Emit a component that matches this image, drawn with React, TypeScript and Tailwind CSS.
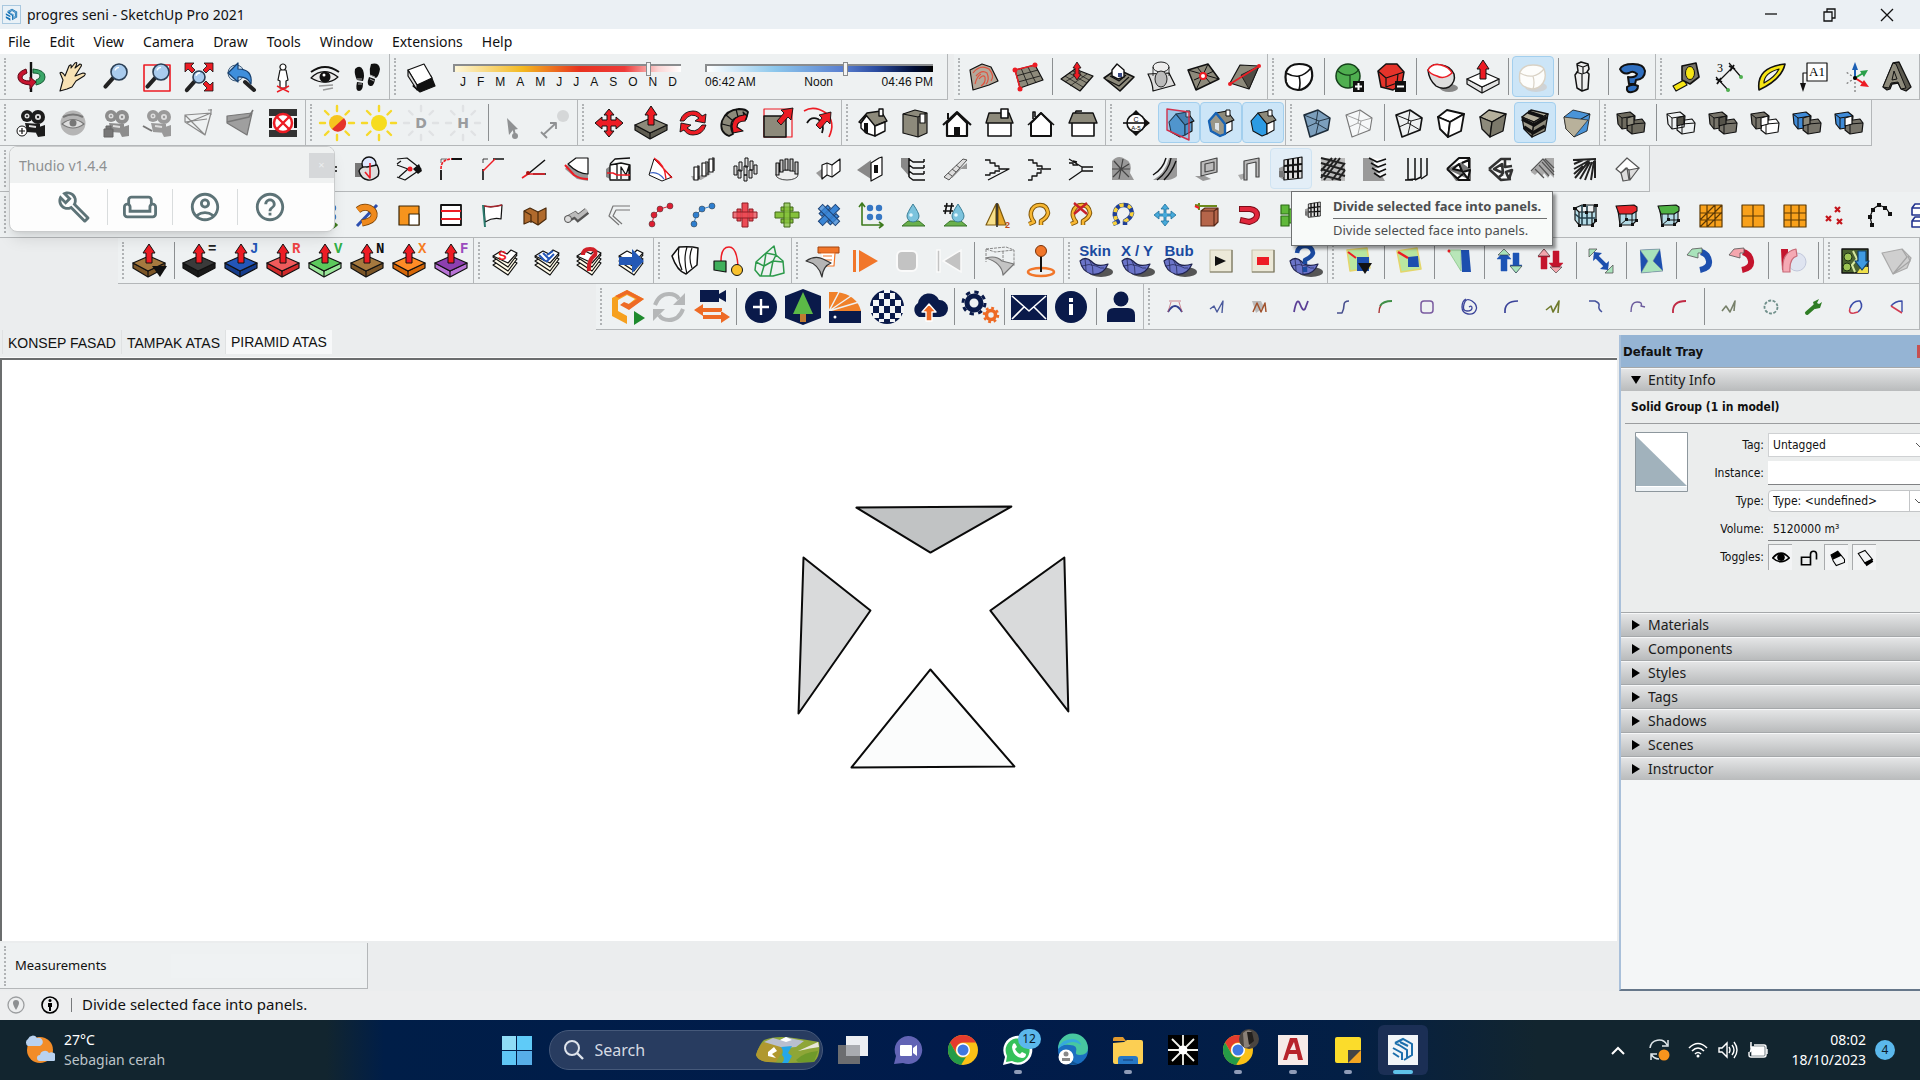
import React from 'react';
import { MdOutlineBuild, MdOutlineWeekend, MdOutlineAccountCircle, MdHelpOutline } from 'react-icons/md';
import { clsx } from 'clsx';

interface StrokeProps {
  d: string;
  c?: string;
  w?: number;
  f?: string;
}

// Stroked path with the defaults most toolbar glyphs use
function P({ d, c = '#111', w = 1.2, f = 'none' }: StrokeProps) {
  return <path d={d} stroke={c} strokeWidth={w} fill={f} strokeLinejoin="round" />;
}

const STONE = '#8d8a7b';
const RED = '#ed1c24';
const NAVY = '#0a1a4a';

/* ---------- shared glyph parts ---------- */

const upArrow = <P d="M18 1l6 9h-3v10h-6V10h-3z" f={RED} w={1} />;

function slab(top: string, side: string, letter?: string, letterColor?: string) {
  return (
    <>
      <P d="M2 20v5l15 9 17-9v-5L17 28z" f={side} />
      <P d="M2 20l16-7 16 7-17 8z" f={top} />
      <P d="M17 28v6" />
      {upArrow}
      {letter && (
        <text x="27" y="10" fontSize="14" fontWeight="700" fill={letterColor} fontFamily="Liberation Mono">
          {letter}
        </text>
      )}
    </>
  );
}

function magnifier(x: number, y: number, r: number) {
  return (
    <>
      <path d={`M${x - r * 0.7} ${y + r * 0.7}L${x - r * 0.7 - 8} ${y + r * 0.7 + 9}`} stroke="#222" strokeWidth="4" strokeLinecap="round" />
      <circle cx={x} cy={y} r={r} fill="#a9cbed" stroke="#2b3f55" strokeWidth="1.6" />
      <path d={`M${x - r * 0.5} ${y - r * 0.2}q1-3 4-3`} stroke="#fff" strokeWidth="1.4" fill="none" />
    </>
  );
}

function movieCamera(c: string, extra: React.ReactNode) {
  return (
    <>
      <circle cx="14" cy="11" r="6" fill={c} />
      <circle cx="25" cy="12" r="7" fill={c} />
      <circle cx="14" cy="11" r="2.5" fill="#ddd" />
      <circle cx="25" cy="12" r="3" fill="#ddd" />
      <circle cx="14" cy="11" r="1" fill={c} />
      <circle cx="25" cy="12" r="1.2" fill={c} />
      <path d="M12 18l15 1v9l-13-1zM26 22l6-2v11l-7 1-2-4z" fill={c} />
      <path d="M16 21l7 1" stroke="#ddd" strokeWidth="2" />
      {extra}
    </>
  );
}

function sun(c: string, center: React.ReactNode) {
  return (
    <>
      {[0, 45, 90, 135, 180, 225, 270, 315].map((a) => (
        <path key={a} d="M18 1v5" stroke={c} strokeWidth="2.4" strokeLinecap="round" transform={`rotate(${a} 18 18)`} />
      ))}
      {center}
    </>
  );
}

function cube(top: string, left: string, right: string, w = 1.3) {
  return (
    <>
      <P d="M5 12l9-7 17 4-14 8z" f={top} w={w} />
      <P d="M5 12l12 5-2 15-8-8z" f={left} w={w} />
      <P d="M17 17l14-8-3 17-13 6z" f={right} w={w} />
    </>
  );
}

function wireCube(f: string, c: string, w: number) {
  return (
    <>
      <P d="M5 10l14-5 12 8-2 12-18 7z" f={f} c={c} w={w} />
      <P d="M5 10l15 6 11-3M20 16l-3 13M19 5l-2 13-9 4M17 18l12 7" c={c} w={w * 0.6} />
    </>
  );
}

function solids(a: string, b: string, mid: string) {
  return (
    <>
      <P d="M4 9l13-2 5 4-1 11-12 2-4-5z" f={a} />
      <P d="M15 16l14-2 3 4-1 9-12 2-5-4z" f={b} />
      <P d="M4 9l5 4 13-2M9 13v11M15 16l4 3 13-1M19 19v10" w={1} />
      <P d="M14 13l7-2v8l-7 2z" f={mid} />
    </>
  );
}

function house(roof: string, wall: string, front: string) {
  return (
    <>
      <P d="M6 16l7-8 9 11v10l-5 2-9-5z" f={front} w={1.1} />
      <P d="M13 8l11-2 7 9-9 4z" f={roof} w={1.1} />
      <P d="M22 19l7-3v9l-7 4z" f={wall} w={1.1} />
      <P d="M23 5h4v6h-4z" f="#fff" w={1} />
    </>
  );
}

function layers(over: React.ReactNode) {
  return (
    <>
      {[24, 20, 16].map((y) => (
        <P key={y} d={`M6 ${y - 2}l5-3 8 5 5-7 6 3-9 12z`} f="#fffbe8" w={1.2} />
      ))}
      <P d="M6 13l8-5 6 3 4-4 6 3-9 10z" f="#fff" w={1.2} />
      {over}
    </>
  );
}

function dots(c: string) {
  return (
    <>
      <P d="M9 27l2-9 6-6 10-3" c={c} w={1} />
      {[[9, 27], [11, 18], [17, 12], [27, 9]].map(([x, y]) => (
        <circle key={x} cx={x} cy={y} r="3" fill={c} stroke="#333" strokeWidth=".5" />
      ))}
    </>
  );
}

function plusBlocks(c: string, edge: string, angle: number) {
  return (
    <g transform={`rotate(${angle} 18 18)`} fill={c} stroke={edge} strokeWidth="1">
      <path d="M15 6h6v24h-6z" />
      <path d="M10 12h4v12h-4zM22 12h4v12h-4z" />
      <path d="M6 15h24v6H6z" fillOpacity=".75" />
    </g>
  );
}

function sail(label: string) {
  return (
    <>
      <ellipse cx="24" cy="29" rx="12" ry="5" fill="#555" />
      <P d="M3 18Q8 13 14 18Q20 25 31 21Q26 33 14 31Q5 28 3 18z" f="#6b74c9" c="#20244f" />
      <P d="M5 23q7-3 14 0q5 3 8 2M12 16q5 8 4 15M8 16q1 8 1 12" c="#20244f" w={0.7} />
      <text x="18" y="13" textAnchor="middle" fontSize="15" fontWeight="700" fill="#1b4aa0" fontFamily="Liberation Sans">
        {label}
      </text>
    </>
  );
}

function loop(c: string, w: number, dash?: string) {
  return (
    <path
      d="M8 27l5-2q-4-5-3-10q2-7 9-7t8 8q-1 5-7 8v4"
      stroke={c}
      strokeWidth={w}
      strokeDasharray={dash}
      fill="none"
      strokeLinejoin="round"
    />
  );
}

function drop(x: number) {
  return (
    <>
      <P d="M7 29l6-5h11l6 5z" f="#6ab04c" c="#39752a" w={1} />
      <P d={`M${x} 7q6 9 6 12a6 6 0 0 1-12 0q0-3 6-12z`} f="#7cc3dd" c="#3b7f97" w={1} />
      <circle cx={x - 2} cy="18" r="1.8" fill="#e5f7fd" />
    </>
  );
}

function latticeBox(top: string) {
  return (
    <>
      <P d="M9 14h18v10l-4 4H11z" f="#b4dbe6" w={1.1} />
      <P d="M11 28V15M23 28V15M11 28l6-5h10M17 23V13" w={1} />
      <P d="M7 9l18-1 3 2v4l-5 3H10z" f={top} w={1.1} />
      <path d="M10 27h3v3h-3zM22 26h3v3h-3zM26 22h3v3h-3zM16 21h3v3h-3z" fill="#111" />
    </>
  );
}

function orangeGrid(lines: string) {
  return <P d={`M7 8h22v22H7z${lines}`} f="#f9a11b" c="#5d3a05" w={1.2} />;
}

function blockArrows(a: string, b: string, flip: boolean) {
  return (
    <g transform={flip ? 'rotate(180 18 18)' : undefined}>
      <P d="M10 28V16H6l7-8 7 8h-4v12z" f={a} c={a} w={0.5} />
      <P d="M13 6l6 6H7z" f={b} c="#333" w={0.6} />
      <P d="M22 10h6v12h3l-6 8-6-8h3z" f={a} c={a} w={0.5} />
      <P d="M19 23h12l-6 7z" f={b} c="#333" w={0.6} />
    </g>
  );
}

function uTurn(a: string, b: string) {
  return (
    <>
      <path d="M17 27q10-2 9-9t-8-9" stroke={a} strokeWidth="6" fill="none" />
      <P d="M19 5v5h-4v5L4 12l5-6z" f={b} c="#555" w={0.8} />
    </>
  );
}

/* ---------- icon table, 36x36 with the centre on 18,18 ---------- */

const icons: Record<string, React.ReactNode> = {
  hidden: null,

  // Camera
  Orbit: (
    <>
      <P d="M20 10q12 1 12 8q0 6-9 8v-5q4-1 4-4q0-3-7-3z" f="#3aa668" c="#155c33" w={1} />
      <P d="M18 3v30" w={2.4} />
      <P d="M13 10Q4 13 5 19q1 6 12 7v4l6-7-6-5v4q-8 0-8-4q0-2 5-4z" f="#c8142f" c="#5e0715" w={1} />
    </>
  ),
  Pan: (
    <P d="M5 32l3-11-3-7q2-2 5 3l4-10q3-3 2 2l4-5q3-2 1 3l-1 2 5-4q3 0 0 4l-5 8 8-3q4 0 1 3l-8 5-4 6-5 2z" f="#f8e2b4" w={1.1} />
  ),
  Zoom: magnifier(22, 13, 8),
  'Zoom Window': (
    <>
      <P d="M5 6h26v26H5z" c={RED} w={1.6} />
      {magnifier(22, 13, 8)}
    </>
  ),
  'Zoom Extents': (
    <>
      {magnifier(18, 18, 6)}
      <P d="M4 4h9l-3 3 4 4-3 3-4-4-3 3zM32 4h-9l3 3-4 4 3 3 4-4 3 3zM32 32h-9l3-3-4-4 3-3 4 4 3-3z" f={RED} w={0.8} />
    </>
  ),
  Previous: (
    <>
      <path d="M22 23l9 8" stroke="#222" strokeWidth="4" strokeLinecap="round" />
      <circle cx="13" cy="14" r="8" fill="#cfe0f0" stroke="#44607d" />
      <P d="M5 14L15 4v6q15 0 13 15q-4-8-13-7v5z" f="#3f8fdc" c="#173f6d" />
    </>
  ),
  'Position Camera': (
    <>
      <P d="M15 11h6l2 10-2 1v7h-6v-7l-2-1zM18 5a3 3 0 1 1-.1 0z" f="#fff" />
      <P d="M12 27l12 6M24 27l-12 6" c={RED} w={1.4} />
    </>
  ),
  'Look Around': (
    <>
      <P d="M4 19q12-12 27-1q-11 10-27 1z" f="#e9e9e9" />
      <circle cx="18" cy="18" r="5.5" fill="#111" />
      <circle cx="17" cy="16" r="1.5" fill="#fff" />
      <P d="M4 13Q18 3 32 13" w={2} />
      <P d="M12 27l14-1M16 31l10-2" c="#999" w={1.5} />
    </>
  ),
  Walk: (
    <>
      <path d="M6 10q5-5 8 1q2 6 0 11l-6-1q-3-6-2-11zM8 23l6 1q0 8-4 8t-2-9zM22 5q8-2 9 5q-1 7-4 9l-6-3q-1-6 1-11zM20 18l6 2q-1 8-5 7t-1-9z" fill="#111" />
      <path d="M8 20h5M9 25h4M21 16l5 2M21 20l4 2" stroke="#aaa" strokeWidth="1" />
    </>
  ),
  'Show Shadows': (
    <>
      <P d="M10 27l7 6 15-6-4-10z" f="#111" />
      <P d="M5 11l16-6 8 14-15 7z" f="#fff" />
      <P d="M5 11l9 15v5L5 17z" f="#ddd" />
    </>
  ),

  // Sandbox
  Contours: (
    <>
      <P d="M3 11l12-6 9 3 7 14-9 4-16 5z" f="#b4a89a" />
      <P d="M6 14q7-9 16-4q6 7 2 12M9 17q6-7 11-3q3 7-1 11M12 20q4-5 6-2q1 6-4 9M8 25q2-8 6-10" c="#e0533f" w={1.2} />
    </>
  ),
  Scratch: (
    <>
      <P d="M6 11l20-5 8 15-23 8z" f={STONE} />
      <P d="M12 9l7 17M19 8l8 16M7 17l22-6M9 23l22-6" w={0.8} />
      <P d="M11 29L6 11l20-5" c={RED} w={1.5} />
      <circle cx="6" cy="11" r="2.5" fill={RED} />
      <circle cx="26" cy="6" r="2.5" fill={RED} />
      <circle cx="11" cy="30" r="2.5" fill={RED} />
    </>
  ),
  Smoove: (
    <>
      <P d="M2 20l14-10 18 7-13 15z" f={STONE} />
      <P d="M6 17l18 11M10 14l18 10M6 23l16-10M11 27l17-12M14 12l16 9" w={0.7} />
      <P d="M18 3l4 6h-2v6h2l-4 6-4-6h2V9h-2z" f={RED} w={0.8} />
    </>
  ),
  Stamp: (
    <>
      <P d="M3 19l13-9 17 8-14 14z" f={STONE} w={1.6} />
      <P d="M6 21l12 6 10-9M9 17l9 5 7-6" />
      <P d="M11 11l5-6 7 6v7l-6 2-6-3z" f="#fff" w={1.4} />
      <path d="M17 14h4v4h-4z" fill="#3b4b86" />
    </>
  ),
  Drape: (
    <>
      <P d="M5 15l21-1 6 12-22 6q0-7-5-17z" f="#ddd" w={1.2} />
      <ellipse cx="18" cy="8" rx="8" ry="5" fill="#eee" stroke="#222" />
      <P d="M10 8v9M26 8v9" w={0.8} />
      <ellipse cx="18" cy="20" rx="6" ry="8" fill="#bbb" stroke="#222" />
    </>
  ),
  'Add Detail': (
    <>
      <P d="M3 11l20-6 11 15-23 11z" f={STONE} w={1.5} />
      <P d="M3 11l31 9M23 5L11 31M9 21l20-9M12 8l14 17" w={1} />
      <circle cx="18" cy="17" r="3" fill="#fff" stroke={RED} strokeWidth="2" />
    </>
  ),
  'Flip Edge': (
    <>
      <P d="M3 24L13 6l19 1-10 23z" f={STONE} />
      <P d="M32 7l-10 23-8-14z" f="#4f4d45" w={0.8} />
      <P d="M3 25L32 7" c={RED} w={1.6} />
      <circle cx="3" cy="25" r="2" fill={RED} />
      <circle cx="32" cy="7" r="2" fill={RED} />
    </>
  ),

  // SubD
  Subdivide: (
    <>
      <P d="M5 13q3-8 13-8q9 0 12 4q3 9-1 15q-5 7-12 7q-10-1-12-8q-1-5 0-10z" f="#fff" w={2.2} />
      <P d="M5 14q7 4 13 3t12-8M18 17q2 7 0 14" w={1.6} />
    </>
  ),
  'Increase Subdivision': (
    <>
      <circle cx="17" cy="17" r="12" fill="#4faf50" stroke="#14401a" strokeWidth="1.5" />
      <P d="M7 12q6 5 12 4t9-6M19 16v13" c="#14401a" />
      <path d="M22 22h11v11H22z" fill="#111" />
      <path d="M27.5 24v7M24 27.5h7" stroke="#fff" strokeWidth="2" />
    </>
  ),
  'Decrease Subdivision': (
    <>
      <P d="M5 12l8-7h11l7 8-2 12-9 6-12-3z" f="#e5332a" w={1.5} />
      <P d="M5 12l8 7 12-4 6-2M13 19v9M25 15l-1 9-11 4" />
      <path d="M22 22h11v11H22z" fill="#111" />
      <path d="M24 27.5h7" stroke="#fff" strokeWidth="2" />
    </>
  ),
  Crease: (
    <>
      <ellipse cx="26" cy="29" rx="9" ry="4" fill="#888" />
      <P d="M5 11q4-7 13-5q9 1 13 9q2 8-5 13-7 3-13-1Q6 21 5 11z" f="#ddd" w={1.5} />
      <P d="M5 11q4-7 13-5q8 2 11 8-8 7-15 3Q7 15 5 11z" f="#fff" c={RED} w={1.5} />
    </>
  ),
  'SubD Push Pull': slab('#fff', '#e3e3e3'),
  'SubD Preview': (
    <>
      <ellipse cx="21" cy="28" rx="11" ry="5" fill="#cfd3d6" />
      <P d="M5 13q3-7 13-7q9 0 11 4q3 8-1 14q-4 6-11 6q-9-1-12-7q-1-5 0-10z" f="#fdfdfb" c="#d9d2c5" w={1.4} />
      <P d="M5 14q7 4 13 3t11-7M18 17q2 7 0 13" c="#d9d2c5" />
    </>
  ),
  'Loop Select': (
    <>
      <P d="M12 5l4-2 7 2 1 5-2 3 2 2-1 15-6 2-5-3-2-13 3-4z" f="#eee" w={1.5} />
      <P d="M12 6l6 2 5-2M11 13l6 2 6-2M17 15v17M18 8v6" />
    </>
  ),
  'SubD Help': (
    <P d="M5 10q2-5 13-5t12 7q0 8-9 9l-1 4h-6l-1-7q8 1 9-3-4-4-8-1-6 2-9-4zM12 28q5-4 11-1 0 5-6 6t-5-5z" f="#2f6fc0" w={2} />
  ),

  // Construction
  'Tape Measure': (
    <>
      <P d="M4 27l11-6 3 5-11 6z" f="#f6e514" />
      <P d="M13 7l14-3 3 14-9 7-8-4z" f="#77746a" w={1.6} />
      <ellipse cx="21" cy="14" rx="4.5" ry="6.5" fill="#f6e514" stroke="#111" />
    </>
  ),
  Dimension: (
    <>
      <P d="M8 22L21 9M5 18l13 14M18 4l12 14" />
      <path d="M5 20l6 3M6 25l4-6M18 7l6 3M19 12l4-6" stroke="#111" strokeWidth="1.8" />
      <text x="6" y="13" fontSize="12" fontFamily="Liberation Serif">3</text>
      <circle cx="17" cy="31" r="2" fill="#4faf50" />
      <circle cx="30" cy="18" r="2" fill="#4faf50" />
    </>
  ),
  Protractor: (
    <>
      <P d="M6 31Q3 8 32 5 29 20 6 31z" f="#f6e514" w={1.6} />
      <P d="M11 24q0-10 15-14-4 8-15 14z" f="#eef1f2" />
    </>
  ),
  Text: (
    <>
      <P d="M12 4h20v18H12zM12 14H8v12" f="#fff" />
      <path d="M5 24h6l-3 9z" fill="#111" />
      <text x="22" y="17" fontSize="13" textAnchor="middle" fontFamily="Liberation Serif">A1</text>
    </>
  ),
  Axes: (
    <>
      <path d="M18 19L9 13M18 19v14M18 19l-9 6" stroke="#777" strokeWidth="1.2" strokeDasharray="2 2" />
      <P d="M18 19V6" c="#1b5fb4" w={2} />
      <P d="M18 19l10-6" c="#2aa04a" w={2} />
      <P d="M18 19l11 7" c={RED} w={2} />
      <path d="M18 3l3 8h-6z" fill="#1b5fb4" />
      <path d="M31 11l-8 1 4 6z" fill="#2aa04a" />
      <path d="M32 28l-9-1 4-6z" fill={RED} />
      <circle cx="18" cy="19" r="2" />
    </>
  ),
  '3D Text': (
    <>
      <P d="M4 28L14 4l6-1 12 25-5 4-5-2-3-6-6 1-2 5-3 1z" f="#5b594f" w={1.3} />
      <P d="M4 28L14 4l3 1 10 24-5 1-3-7-7 1-2 5zM15 12l3 8-5 1z" f={STONE} w={1} />
    </>
  ),

  // Advanced camera tools
  'Create Camera': movieCamera(
    '#1c1c1c',
    <>
      <circle cx="9" cy="26" r="5" fill="#fff" stroke="#111" />
      <P d="M9 23v6M6 26h6" />
    </>
  ),
  'Look Through Camera': (
    <>
      <circle cx="18" cy="18" r="12.5" fill="#b5b5b5" />
      <P d="M7 19q11-9 22 0-11 8-22 0z" f="#ddd" c="#777" />
      <circle cx="18" cy="18" r="3.5" fill="#777" />
      <P d="M8 12q10-5 20 0" c="#777" w={2} />
    </>
  ),
  'Lock Camera': movieCamera('#8d8d8d', <path d="M7 24h9v8H7zM9 24v-3h5v3" fill="#777" stroke="#666" />),
  'Camera Lines': movieCamera('#9a9a9a', <P d="M4 21l9 5" c="#777" w={2} />),
  'Frustum Lines': <P d="M4 10l26-2-6 22zM4 10v7l20 13M30 8L6 18M4 17l22-3M30 4v6M27 5h4" c="#8a8a8a" w={1.2} />,
  'Frustum Volume': (
    <>
      <P d="M4 11l25-3-5 22L4 18z" f="#9f9f9f" c="#777" />
      <P d="M4 17l22-5 4-7" c="#777" w={1.6} />
    </>
  ),
  'Clear Aspect Ratio': (
    <>
      <path d="M4 4h28v7H4zM4 25h28v7H4z" fill="#333" />
      <path d="M4 13h3v10H4zM29 13h3v10h-3z" fill="#111" />
      <circle cx="18" cy="18" r="9" fill="#fff" stroke={RED} strokeWidth="2.5" />
      <P d="M12 12l12 12M24 12L12 24" c={RED} w={2.4} />
    </>
  ),

  // Solar
  'Solar North': sun(
    '#f6d92a',
    <>
      <circle cx="18" cy="18" r="8" fill="#f6c51f" />
      <path d="M25 13a8 8 0 0 1-12 11z" fill="#e5332a" />
    </>
  ),
  'Solar Preview': sun('#f6d92a', <circle cx="18" cy="18" r="8" fill="#f6dc1f" />),
  'Solar Day': sun(
    '#e0e2e4',
    <text x="18" y="23" fontSize="14" fontWeight="700" fill="#9a9c9e" textAnchor="middle" fontFamily="DejaVu Sans">D</text>
  ),
  'Solar Hour': sun(
    '#e0e2e4',
    <text x="18" y="23" fontSize="14" fontWeight="700" fill="#9a9c9e" textAnchor="middle" fontFamily="DejaVu Sans">H</text>
  ),
  'Select Point': (
    <>
      <path d="M12 13l11 11-5 1-4 5z" fill="#8f9193" />
      <P d="M18 22l2 8" c="#8f9193" w={2} />
      <circle cx="20" cy="31" r="3" fill="#8f9193" />
    </>
  ),
  'Stretch Point': (
    <>
      <circle cx="26" cy="11" r="6" fill="#d5d7d8" />
      <P d="M6 30L18 19M4 27l6 6M13 18h6v6" c="#8f9193" w={1.8} />
    </>
  ),

  // Edit
  Move: (
    <P d="M18 4l5 6h-3v5h5v-3l7 6-7 6v-3h-5v5h3l-5 6-5-6h3v-5h-5v3l-7-6 7-6v3h5v-5h-3z" f={RED} w={1} />
  ),
  'Push Pull': slab(STONE, '#5f5d52'),
  Rotate: (
    <>
      <P d="M5 16Q8 6 18 6q6 0 9 5l4-2-1 9-10-2 4-3q-8-7-15 3z" f={RED} w={0.9} />
      <P d="M31 20q-3 10-13 10-6 0-9-5l-4 2 1-9 10 2-4 3q8 7 15-3z" f={RED} w={0.9} />
    </>
  ),
  'Follow Me': (
    <>
      <P d="M12 31Q2 27 5 16 9 5 22 4q7 0 9 3l-2 7q-8-4-13 1-4 5 0 14z" f={STONE} w={1.8} />
      <P d="M5 19l8 2M9 10l6 5M19 4l2 8" w={1.2} />
      <P d="M15 21q1-10 12-11l-1-3 4 4-2 5q-8 0-8 6l6 4-10 2z" f={RED} />
    </>
  ),
  Scale: (
    <>
      <P d="M5 4h28v28H5z" c={RED} />
      <P d="M5 11h22v21H5z" f={STONE} w={1.5} />
      <P d="M34 3L22 5l3 3-7 8 4 4 7-8 3 3z" f={RED} w={0.9} />
    </>
  ),
  Offset: (
    <>
      <P d="M3 6Q13 0 25 8q10 9 3 24" c={RED} w={1.6} />
      <P d="M6 18q4-7 11-4 7 5 4 14" w={1.8} />
      <P d="M30 7l-12 3 3 3-6 7 4 4 7-8 3 3z" f={RED} w={0.9} />
    </>
  ),

  // Views
  Iso: (
    <>
      <P d="M6 18l6-8 8 9v12l-9-3-5-5z" f="#fff" w={1.4} />
      <P d="M4 17l8-9 14-2 6 10-12 5-9-11-5 8z" f={STONE} w={1.4} />
      <P d="M20 21l10-4v9l-10 5zM24 4h4v7h-4z" f="#fff" w={1.4} />
      <path d="M9 18h4v11l-4-2z" fill="#111" />
    </>
  ),
  Top: (
    <>
      <P d="M6 9l12-4 12 3v20l-9 4-15-4z" f={STONE} w={1.2} />
      <P d="M6 9l15 3 9-4M21 12v20" w={1.2} />
      <P d="M23 9h5v9h-5z" f="#fff" w={1.2} />
    </>
  ),
  Front: (
    <>
      <P d="M8 18L18 8l10 10v13H8z" f="#fff" w={2.2} />
      <P d="M4 20L18 7l14 13M9 14V8" w={2} />
      <path d="M15 22h6v9h-6z" fill="#111" />
    </>
  ),
  Right: (
    <>
      <P d="M7 17h23v14H7z" f="#fff" w={1.6} />
      <P d="M8 8h20l4 10H5z" f={STONE} w={1.4} />
      <P d="M20 4h7v9h-7z" f="#fff" w={1.6} />
    </>
  ),
  Back: (
    <>
      <P d="M8 18L18 8l10 10v13H8z" f="#fff" w={2} />
      <P d="M5 20L18 8l13 12M10 14V7h2v5" w={1.6} />
    </>
  ),
  Left: (
    <>
      <P d="M7 17h22v14H7z" f="#fff" w={1.6} />
      <P d="M8 8h20l4 10H4zM10 8l1-2h6" f={STONE} w={1.4} />
    </>
  ),

  // Section
  'Section Plane': (
    <>
      <circle cx="17" cy="18" r="9" fill="#fff" stroke="#111" strokeWidth="1.6" />
      <P d="M4 18h26" w={1.6} />
      <path d="M17 5l5 5H12zM31 18l-6-5v10zM17 31l5-5H12z" fill="#111" />
      <text x="17" y="17" fontSize="7" textAnchor="middle" fontFamily="Liberation Sans">C</text>
      <text x="17" y="25" fontSize="6" textAnchor="middle" fontFamily="Liberation Sans">A-5</text>
    </>
  ),
  'Display Section Planes': (
    <>
      <g transform="translate(2 1)">{house('#4a7ba6', '#5b9bd0', '#5b9bd0')}</g>
      <P d="M6 4l22 3v28L6 25z" c="#d2314b" w={1.4} f="#3c8ac955" />
    </>
  ),
  'Display Section Cuts': (
    <>
      {house(STONE, '#fff', '#9a9788')}
      <P d="M6 16l7-8 9 11v10l-5 2-9-5z" c="#1763b5" w={2.4} />
      <path d="M12 18h4v8l-4-2z" fill="#dfe6ea" />
    </>
  ),
  'Display Section Fill': house(STONE, '#fff', '#2d9be3'),

  // Styles
  'X-Ray': wireCube('#7c9fbd', '#1d2c3a', 1.5),
  'Back Edges': wireCube('#f6f8f9', '#777', 1.1),
  Wireframe: wireCube('none', '#111', 1.6),
  'Hidden Line': cube('#fff', '#fff', '#fff', 1.8),
  Shaded: cube('#b5b09c', '#8d8a7b', '#7c796b'),
  'Shaded With Textures': (
    <>
      {cube('#b5b09c', '#a09c8c', '#8d8a7b')}
      <path d="M11 7l15 5M5 14l12 6 13-8M7 22l9 6 12-7" stroke="#111" strokeWidth="3.5" fill="none" />
    </>
  ),
  Monochrome: (
    <>
      {cube('#4a94d8', '#b5b09c', '#4a94d8', 0.8)}
      <P d="M5 12l24 3-14 17-8-8z" f="#b8b19b" w={0.6} />
    </>
  ),

  // Solid tools
  'Outer Shell': solids('#6f6c60', '#6f6c60', '#8d8a7b'),
  Intersect: solids('none', 'none', '#55534a'),
  Union: solids('#77746a', '#77746a', '#55534a'),
  Subtract: solids('#77746a', '#fff', '#fff'),
  Trim: solids('#3f8bd8', '#77746a', '#8d8a7b'),
  Split: solids('#3f8bd8', '#77746a', '#fff'),

  // 1001bit tools
  Revolve: (
    <>
      <path d="M6 12h12v14H6z" fill="#777" />
      <circle cx="20" cy="13" r="7" fill="#dfe8ff" stroke="#111" strokeWidth="1.4" />
      <P d="M10 20q2-5 8-4l10-2q3 6 1 11-6 5-10 4-7-1-9-9z" f="#ddd" w={1.4} />
      <P d="M21 12v15l-5-6" c={RED} w={1.6} />
    </>
  ),
  'Face Center': (
    <>
      <P d="M6 8l10-1 14 11-16 11-8-3M6 14l11 4-9 8M6 13l4-3" w={1.2} />
      <path d="M28 13l3 7-4 3-5-5z" fill="#111" />
      <circle cx="19" cy="18" r="2.5" fill={RED} />
    </>
  ),
  Fillet: (
    <>
      <P d="M8 29V19M18 8h11" w={1.8} />
      <path d="M8 18q0-10 11-10" stroke={RED} strokeWidth="1.6" strokeDasharray="3 1" fill="none" />
      <P d="M8 12V8h6" w={0.6} />
    </>
  ),
  Chamfer: (
    <>
      <P d="M8 29V18M18 8h11" w={1.6} />
      <P d="M8 20L20 8" c={RED} w={1.4} />
      <P d="M8 12V8h5" w={0.8} />
    </>
  ),
  'Extend Edge': (
    <>
      <P d="M11 23L28 9M16 23h13" w={1.5} />
      <P d="M5 27l6-4h17" c={RED} w={1.6} />
      <circle cx="11" cy="22" r="2" fill="#a11" />
    </>
  ),
  'Offset Edges': (
    <>
      <path d="M6 18l12 10 11 2v-7L10 12z" fill="#999" />
      <P d="M9 13l8-6h12v16q-10 0-20-10z" f="#fff" />
      <P d="M6 14l9 10q6 4 14 4" c={RED} w={2} />
    </>
  ),
  'Horizontal Plane': (
    <>
      <path d="M5 18l4-3v13l-4-2z" fill="#888" />
      <P d="M9 13l5-5 15-1M9 14v15h20V14l-9-2zM16 13v15M20 28V16l5 8 3-9v14" w={1.3} f="#fff" />
      <P d="M6 22h6l4 2h13" c={RED} w={1.5} />
    </>
  ),
  'Best Fit': (
    <>
      <P d="M11 8l18 18-10 4-13-6 5-16z" f="#fff" w={1} />
      <P d="M11 7q11 6 12 21M12 8l17 19" c={RED} w={1.4} />
      <P d="M7 22q8-2 14 6" c="#3b62c4" />
    </>
  ),
  'Linear Array': (
    <>
      <path d="M6 25h8l9-4 3 2-10 6H8z" fill="#aaa" />
      <P d="M9 16h4v13H9zM17 12h4v13h-4zM24 8h4v13h-4z" f="#fff" />
      <P d="M12 15h2v13M20 11h3v13M27 7h2v13" />
    </>
  ),
  'Rectangular Array': (
    <P d="M7 15h3v9H7zM12 11h3v9h-3zM18 7h3v9h-3zM23 10h3v9h-3zM11 19h3v8h-3zM17 15h3v9h-3zM27 14h3v9h-3zM17 24h3v6h-3zM22 19h3v8h-3z" f="#ddd" w={1} />
  ),
  'Polar Array': (
    <>
      <ellipse cx="18" cy="24" rx="11" ry="5" fill="#eee" stroke="#444" />
      <P d="M7 12h3v12H7zM11 9h3v12h-3zM16 8h3v11h-3zM21 8h3v12h-3zM26 11h3v12h-3z" f="#ccc" w={1.1} />
    </>
  ),
  'Vertical Wall': (
    <>
      <path d="M5 22l10-7v9l-4 4z" fill="#999" />
      <P d="M11 14l5-2 5 2 8-6v12l-8 6-5-2-5 4z" f="#fff" w={1.2} />
      <P d="M16 12v12M21 14v12" w={0.8} />
    </>
  ),
  'Wall Opening': (
    <>
      <path d="M4 19l14-10v19z" fill="#888" />
      <P d="M18 12l8-5 3-1v18l-11 6z" f="#fff" w={1.2} />
      <path d="M21 14h4v8h-4z" fill="#111" />
    </>
  ),
  'Horizontal Groove': (
    <>
      <path d="M6 7h8v18l-8-9z" fill="#888" />
      <P d="M14 8l4 3h11M14 14l4 3h11M14 20l4 3h11M14 26l4 3h12M14 7v19M29 8v3M29 14v3M29 20v3" w={1.5} />
    </>
  ),
  Ramp: (
    <>
      <path d="M14 25l16-13v6h-6l-9 9z" fill="#999" />
      <P d="M7 26L26 8l4 1L12 29zM11 22l4 3M15 18l4 3M19 14l4 3" f="#ddd" c="#555" w={1} />
    </>
  ),
  'Stair Up': <P d="M6 9h5v3h5v3h4v3h10L9 29M6 24h5v-2h5v-2h5" w={1.3} />,
  'Stair Down': <P d="M7 9h5v3h4v3h5v3h9M7 29h4v-4h5v-3h4v-3M16 18h12" w={1.3} />,
  'Stair Split': <P d="M6 8l13 8h11M6 29l13-9h11M6 12h4v2h5M19 16v4M10 10l4 1" w={1.3} />,
  'Spiral Stair': (
    <>
      <path d="M7 10q6-7 13-2 8 3 5 14l4 7H7z" fill="#999" />
      <P d="M7 18h9l-7-8M16 18l2-10M16 18l8-5M16 18h9M16 18l8 8M16 18l-2 10M8 26l8-8" c="#444" />
    </>
  ),
  Escalator: (
    <>
      <path d="M6 29q12-6 16-22h8v18q-3 3-9 4z" fill="#999" />
      <P d="M6 24q10-6 13-17M10 29q12-9 14-22M17 29q8-8 12-19" w={1.4} />
    </>
  ),
  'Window Frame': (
    <>
      <path d="M6 25h10l6 3-8 2z" fill="#999" />
      <P d="M12 11l16-4v14l-16 4zM16 13l9-2v8l-9 2z" f="#bbb" c="#444" />
    </>
  ),
  'Door Frame': (
    <>
      <path d="M7 24l8-2v4l-5 3z" fill="#aaa" />
      <P d="M13 29V10l15-3v19h-3V11l-9 2v16z" f="#bbb" c="#444" />
    </>
  ),
  'Divide Face': (
    <>
      <path d="M6 17l5-2v14l-5-3z" fill="#999" />
      <P d="M11 9l18-3v21l-18 2z" f="#ddd" w={1.2} />
      <P d="M15 8v20M20 7v20M25 7v20M11 15l18-2M11 21l18-1" w={2} />
      <path d="M6 20h5v6H6z" fill="#777" />
    </>
  ),
  Louvers: (
    <>
      <path d="M6 7h24v23H6z" fill="#bbb" />
      <P d="M6 7l24 6M6 12l24 7M6 18l24 7M6 24l20 5M9 29L25 7M17 29L30 12M6 20L17 7M6 27L21 7M23 29l7-10" w={2} c="#222" />
    </>
  ),
  'Louver Stack': (
    <>
      <path d="M6 7h8l14 23H6z" fill="#999" />
      <P d="M12 7l8 4 9-3M14 12l7 4 8-3M15 17l7 4 7-3M17 22l6 4 6-3" w={1.7} f="#fff" />
    </>
  ),
  Fins: <P d="M9 7v21M16 7v21l-9 1M22 7v19l-6 3M28 7v17l-6 4M6 29h8" w={1.5} />,
  'Grid Dense': (
    <>
      <path d="M6 18L17 7h13v23H15z" fill="#777" />
      <P d="M6 18L18 7h11M6 18l12 11h11M12 18l6-5 3 7zM21 12l7-3v8M22 21l7-2-2 9zM17 27l5-4" w={2} f="#fff" />
    </>
  ),
  'Grid Frame': (
    <P d="M6 18L18 8h10M6 18l12 11 10-1M11 18l8-5 1 9zM22 9v7l7-1M23 21l6-2-3 9zM16 26l4-3" w={2.6} f="#fff" c="#333" />
  ),
  Purlins: (
    <>
      <path d="M6 21L20 7h9v20l-4-4-2 4-4-5-2 4-4-5-3 3z" fill="#aaa" />
      <P d="M6 20L18 8l11 13M10 18l9 9M14 14l10 11M17 11l12 13M20 8l9 9" c="#555" />
    </>
  ),
  Rafters: <P d="M6 9l23-1M7 13l9-4M7 18l16-9M8 27l14-17M13 28l10-17M18 29l7-18M24 29l3-19M28 27V9M7 23l9-8" w={2} c="#222" />,
  'Hip Roof': (
    <>
      <P d="M7 18L18 7l12 10-7 4-6-4-5 5z" f="#fff" c="#555" />
      <P d="M12 22l6-5 2 12-6 1zM20 19l10-2-9 12z" f="#ddd" c="#555" />
    </>
  ),

  // JHS power bar
  Ring: (
    <>
      <P d="M8 29L28 8" c="#2d4fb0" w={3} />
      <path d="M9 13q5-4 11-2 6 3 5 8t-12 7" stroke="#7a4308" strokeWidth="7" fill="none" />
      <path d="M9 13q5-4 11-2 6 3 5 8t-12 7" stroke="#ef8a1d" strokeWidth="5.5" fill="none" />
    </>
  ),
  'Corner Cut': (
    <>
      <P d="M8 9h20v19H8z" f="#f7941d" c="#3b2608" />
      <P d="M18 17h10v11H18z" f="#fff" c="#3b2608" />
    </>
  ),
  Lines: (
    <>
      <P d="M8 8h20v20H8z" f="#fff" w={1.8} />
      <P d="M8 14h20M8 22h20" c={RED} w={2} />
    </>
  ),
  Flag: (
    <>
      <P d="M9 9q8 2 18-1l-1 14q-8-2-16 3z" f="#fff" />
      <P d="M9 9q8 2 18-1" c="#a8252c" w={1.6} />
      <P d="M8 8l2 22" c="#2b7a6d" w={2} />
    </>
  ),
  'Wood Profile': (
    <>
      <P d="M7 14l6-3 8 4 8-4v11l-8 6-7-4-7 3z" f="#b06a2c" c="#4a2a0c" />
      <P d="M7 14l7 4v8M21 15v13" c="#4a2a0c" />
    </>
  ),
  Pipe: (
    <>
      <path d="M7 23l9-5 3 3 9-7" stroke="#555" strokeWidth="7" fill="none" />
      <path d="M7 22l9-5 3 3 9-7" stroke="#bbb" strokeWidth="4" fill="none" />
      <circle cx="9" cy="22" r="3.5" fill="#ddd" stroke="#555" />
    </>
  ),
  Elbow: <P d="M29 9H12l-4 10 10 9M29 13H15l-3 6 9 8" c="#777" />,
  'Red Dots': dots('#dd1f33'),
  'Blue Dots': dots('#2f7fcf'),
  'Cross Red': plusBlocks('#ec4b55', '#8d1c24', 0),
  'Cross Green': plusBlocks('#86c13c', '#42681a', 90),
  'Cross Blue': plusBlocks('#3b86d6', '#1b4277', 45),
  'Axis Array': (
    <>
      <P d="M9 7v21h20M6 10l3-4 3 4M26 25l4 3-4 3" c="#3d7a1d" w={1.6} />
      {[[17, 11], [26, 11], [17, 20], [26, 20]].map(([x, y]) => (
        <circle key={`${x}-${y}`} cx={x} cy={y} r="3.2" fill="#3677c4" />
      ))}
    </>
  ),
  Drop: drop(18),
  'Drop Grid': (
    <>
      {drop(21)}
      <P d="M10 6L8 17M15 6l-2 11M7 9h10M6 14h10" w={1.6} />
    </>
  ),
  Mirror: (
    <>
      <P d="M17 7v21H7z" f="#f8e08a" c="#7c5a10" />
      <P d="M19 7v21h8z" f="#e8a92c" c="#7c5a10" />
      <P d="M18 6v24" w={1.4} />
      <text x="26" y="31" fontSize="9" fontWeight="700" fill="#c14a1a" fontFamily="Liberation Sans">2</text>
    </>
  ),
  Loop: (
    <>
      {loop('#7b5206', 4.5)}
      {loop('#f7b733', 2.6)}
    </>
  ),
  'Loop Remove': (
    <>
      {loop('#7b5206', 4.5)}
      {loop('#f7b733', 2.6)}
      <P d="M11 6l13 11M24 6L11 17" c="#c8202a" w={2.4} />
    </>
  ),
  'Loop Divide': (
    <>
      {loop('#1f3f96', 4.5)}
      {loop('#f9d33c', 3.5, '4 4')}
    </>
  ),
  'Drop Move': (
    <>
      <path d="M18 7l4 5h-3v4h-2v-4h-3zM18 29l4-5h-3v-4h-2v4h-3zM7 18l5-4v3h4v2h-4v3zM29 18l-5-4v3h-4v2h4v3z" fill="#46aadb" stroke="#1f6f99" strokeWidth=".8" />
      <circle cx="18" cy="18" r="2.5" fill="#46aadb" />
    </>
  ),
  Crate: (
    <>
      <P d="M12 14l4-3h13v14l-4 4H12zM12 14h13v15M25 14l4-3" f="#b5654a" c="#5a2a1a" />
      <P d="M6 8l8 1h14M10 6v7" c="#6d8a1c" w={2} />
      <P d="M6 9l4 2" c={RED} w={2} />
    </>
  ),
  'Bend Arrow': (
    <>
      <path d="M8 12h11q7 1 7 6t-8 7l-9-2" stroke="#7c0c18" strokeWidth="6" fill="none" />
      <path d="M9 12h10q7 1 7 6t-8 7l-8-2" stroke="#e0263b" strokeWidth="4" fill="none" />
    </>
  ),
  'Green Blocks': <P d="M8 8h8v9H8zM8 19h8v10H8zM16 12h8v14h-8z" f="#5fb83a" c="#2c6b17" />,
  'Box Points': (
    <>
      <P d="M8 11l4 4h15V9l2-1M8 11l7-3h14v16l-4 4H12l-4-5zM12 15v13M25 15v13" f="#b4dbe6" />
      <P d="M8 17l5 4h15M15 8v20M20 9v19" w={1.6} c="#24404c" />
      <path d="M6 10h4v3H6zM27 7h4v3h-4zM11 27h3v3h-3zM24 27h3v3h-3zM18 14h3v3h-3zM16 7h3v3h-3zM27 22h3v3h-3z" fill="#111" />
    </>
  ),
  'Box Red Top': latticeBox('#e5262b'),
  'Box Green Top': latticeBox('#4fb244'),
  'Grid Diagonal': orangeGrid('M14 8v22M22 8v22M7 16h22M7 23h22M7 23L22 8M7 30L29 8M14 30l15-15'),
  'Grid Quarter': orangeGrid('M18 8v22M7 19h22'),
  'Grid Ninth': orangeGrid('M14 8v22M22 8v22M7 16h22M7 23h22'),
  Points: <P d="M16 10l5 5M21 10l-5 5M7 19l5 5M12 19l-5 5M18 22l5 5M23 22l-5 5" c="#c4161c" w={2.2} />,
  'Arc Points': (
    <>
      <P d="M11 28l-2-8 3-8 6-4 7 3 4 6" />
      <path d="M9 26h4v4H9zM7 18h4v4H7zM10 11h4v4h-4zM16 6h4v4h-4zM22 9h4v4h-4zM27 15h4v4h-4z" fill="#111" />
    </>
  ),
  Frames: <P d="M9 11l3-4h10v8l-3 3H9zM9 24l3-4h10v8l-3 2H9zM9 11h10v7M9 24h10v6" c="#22338f" w={1.6} f="#fff" />,

  // Joint push pull
  'Joint Options': (
    <>
      {slab('#a5793f', '#7b5526')}
      <path d="M21 23h15l-7 11z" fill="#111" />
    </>
  ),
  'Joint Redo': slab('#3a3a3a', '#1a1a1a', '=', '#222'),
  'Joint Push Pull': slab('#2356b8', '#153c8c', 'J', '#2356b8'),
  'Round Push Pull': slab('#ef5b5b', '#d12a2a', 'R', '#ef4444'),
  'Vector Push Pull': slab('#5cc95c', '#9ae69a', 'V', '#2fae46'),
  'Normal Push Pull': slab('#a5793f', '#7b5526', 'N', '#111'),
  'Extrude Push Pull': slab('#ff8b26', '#d66708', 'X', '#f57c1f'),
  'Follow Push Pull': slab('#8e3fb0', '#b873d6', 'F', '#9a4bbd'),

  // Layers
  'Layer S': layers(<text x="11" y="17" fontSize="13" fontWeight="700" fill={RED} fontFamily="Liberation Sans">S</text>),
  'Layer Blue': layers(<P d="M10 12l6 6M14 10l6 6M18 12l6-4M17 19l8-8" c="#2356b8" w={2} />),
  'Layer Query': layers(<P d="M12 12q0-6 7-6t5 6q-7 5-6 16" c="#d12028" w={4} />),
  'Layer Arrow': layers(<path d="M6 14h13V6l12 12-12 12v-8H6z" fill="#2458b5" />),

  // Curviloft style tools
  Skinning: (
    <>
      <P d="M5 13l7-9q12-1 19 1l-1 17-11 9q-9-3-14-18z" f="#fff" w={1.5} />
      <P d="M12 4q-2 12 3 23M20 4q-4 12 0 27M25 5q-4 10 0 20" />
    </>
  ),
  Loft: (
    <>
      <P d="M12 18Q12 4 20 4t9 20" c={RED} w={1.5} />
      <P d="M5 18h12v11l-12-2z" f="#3faf5c" />
      <circle cx="28" cy="27" r="5.5" fill="#f9c22e" stroke="#111" />
    </>
  ),
  'Path Loft': (
    <P d="M5 19l10-9L23 3l2 9 7 6 1 12-11 3H9l-5-6zM5 19l8 4 9-5 10 1M13 23l-3 10M22 18l-3 15M25 12L15 10l-2 13M22 18l3-6" c="#2c9a4b" w={1.5} />
  ),

  // Flowify
  Flowify: (
    <>
      <P d="M13 4h21v6H13z" f="#f1762a" c="#a4450f" w={1} />
      <P d="M16 10h14l-1 13h-9" f="#fff" c="#f1762a" />
      <P d="M18 13h9M19 17h8" c="#f1762a" />
      <P d="M1 18q9-6 17-2l8 4q-8 3-9 14-3-13-16-16z" f="#b5b5b5" c="#333" />
    </>
  ),
  Play: <path d="M6 7h3v22H6zM12 7l19 11-19 11z" fill="#f1762a" />,
  Stop: <rect x="8" y="8" width="20" height="20" rx="5" fill="#c3c3c3" stroke="#fafafa" strokeWidth="2" />,
  Rewind: <path d="M6 7h3v22H6zM30 7v22L12 18z" fill="#c3c3c3" stroke="#fafafa" strokeWidth="1.5" />,
  'Curved Grid': (
    <>
      <path d="M5 6l20-2 8 3v16M5 6v13M5 6l9 3 19-2M22 8v22" stroke="#888" strokeDasharray="3 1" fill="none" />
      <P d="M5 15q10-3 16 3l12 3-11 11q-1-12-17-17z" f="#c4c4c4" c="#777" />
    </>
  ),
  Pin: (
    <>
      <ellipse cx="18" cy="29" rx="13" ry="4" fill="none" stroke="#f1762a" strokeWidth="2.5" />
      <P d="M18 12v17" w={2} />
      <circle cx="18" cy="8" r="5.5" fill="#f1762a" stroke="#7a3208" />
    </>
  ),

  // Soap skin & bubble
  Skin: sail('Skin'),
  'X/Y': sail('X / Y'),
  Bub: sail('Bub'),
  'Run Soap': (
    <>
      <P d="M7 7h22v22H7z" f="#ece9d8" c="#c9c5ae" />
      <P d="M7 29h22V7" c="#77745f" />
      <path d="M12 13l11 5-11 5z" fill="#111" />
    </>
  ),
  'Stop Soap': (
    <>
      <P d="M7 7h22v22H7z" f="#ece9d8" c="#c9c5ae" />
      <P d="M7 29h22V7" c="#77745f" />
      <path d="M12 14h12v8H12z" fill={RED} />
    </>
  ),
  'Soap Help': (
    <>
      {sail('')}
      <P d="M10 10q1-7 8-7t8 7q-1 4-8 7v4M18 24v5" c="#1b4aa0" w={4.5} />
    </>
  ),

  // Vertex / texture tools
  'Texture Menu': (
    <>
      <P d="M6 7l20-2 3 20-20 3z" f="#b8e6a0" c="#e4d66b" w={1.5} />
      <path d="M16 14h12v14H16z" fill="#1d4fae" />
      <P d="M7 9l8 6" c={RED} w={2} />
      <path d="M17 20h14l-7 11z" fill="#111" />
    </>
  ),
  'Texture Quad': (
    <>
      <P d="M6 8l20-3 4 21-20 3z" f="#b8e6a0" c="#e4d66b" w={1.5} />
      <path d="M17 14l10-1 1 11H17z" fill="#1d4fae" />
      <P d="M7 9l10 6" c={RED} w={2.4} />
    </>
  ),
  'Texture Fan': (
    <>
      <P d="M7 7h13v21z" f="#b8e6b8" c="#8ac58a" w={0.8} />
      <path d="M20 7h8l2 22h-9z" fill="#1d4fae" />
      <circle cx="8" cy="8" r="1.5" fill={RED} />
    </>
  ),
  'Swap Blue': blockArrows('#1c54b5', '#a9e3bb', false),
  'Swap Red': blockArrows('#c4142d', '#f4a6ae', true),
  'Scale Diagonal': (
    <>
      <P d="M12 12l12 12" c="#1d4fae" w={4} />
      <path d="M10 18l1-9 8 1zM26 18l-1 9-8-1z" fill="#1d4fae" />
      <P d="M6 6h8l-8 8zM30 30h-8l8-8z" f="#a9e3bb" c="#555" w={0.8} />
    </>
  ),
  'Twist Quad': (
    <>
      <path d="M7 7l20-1 3 22-22 2z" fill="#1d4fae" />
      <P d="M7 7l20-1-7 12 10 10-22 2 7-12z" f="#a9e3bb" c="#789" w={0.6} />
    </>
  ),
  'Turn Blue': uTurn('#1d4fae', '#a9e3bb'),
  'Turn Red': uTurn('#c4142d', '#f4a6ae'),
  'Bend Pink': (
    <>
      <circle cx="22" cy="19" r="9" fill="#dfe4f0" stroke="#c1c7db" />
      <path d="M6 6h7v21H7z" fill="#c4142d" />
      <P d="M8 29q-2-20 13-23l1 7q-8 2-7 16z" f="#f5a9b4" c="#c76a78" />
    </>
  ),
  Terrain: (
    <>
      <P d="M5 6h26v24H5z" f="#4b6330" w={1.4} />
      <circle cx="11" cy="14" r="4" fill="#9dc454" stroke="#1f3315" />
      <circle cx="10" cy="24" r="4" fill="#9dc454" stroke="#1f3315" />
      <P d="M16 8l4 8-5 6 3 7" c="#d6e8a0" w={2} />
      <path d="M24 24h7v6H20z" fill="#efe04b" />
      <P d="M21 8h8v10h3l-7 9-7-9h3z" f="#3f9ae0" c="#0e3e6b" />
    </>
  ),
  'Grey Wedge': (
    <>
      <P d="M3 10l20-4 9 9-4 10-14 6z" f="#cfcfcf" c="#aaa" />
      <P d="M14 31l17-13-2-5M23 6l5 8-14 17" c="#a5a5a5" />
    </>
  ),

  // Enscape
  'Start Enscape': (
    <>
      <path d="M18 1l17 9-15 10-4-2 10-8-8-4-9 5v11l9 5v8L3 27V9z" fill="#f6a01f" />
      <path d="M18 1l17 9-15 11-9-5 4-3 5 2 8-5-10-5-8 4-4-2z" fill="#ee6a25" />
      <path d="M25 22l11 7-11 7z" fill="#1e8a2d" />
    </>
  ),
  'Live Updates': (
    <>
      <path d="M4 16Q8 5 18 5q7 0 10 5" stroke="#b5b7b8" strokeWidth="4" fill="none" />
      <path d="M32 20q-4 11-14 11-7 0-10-5" stroke="#b5b7b8" strokeWidth="4" fill="none" />
      <path d="M34 4v12H22zM2 32V20h12z" fill="#b5b7b8" />
    </>
  ),
  'Synchronize Views': (
    <>
      <path d="M7 1h19v4l7-4v12l-7-4v4H7z" fill={NAVY} />
      <path d="M1 21l9-6v4h19v4H10v4zM37 28l-9-6v4H10v4h18v4z" fill="#ee6a25" />
    </>
  ),
  'Add View': (
    <>
      <circle cx="18" cy="18" r="16" fill={NAVY} />
      <P d="M18 10v16M10 18h16" c="#fff" w={2.4} />
    </>
  ),
  'Asset Library': (
    <>
      <path d="M18 0l18 7v22l-18 7-18-7V7z" fill={NAVY} />
      <path d="M15 24h6v9h-6z" fill="#c07b31" />
      <path d="M18 3l10 22H8z" fill="#5cb947" />
    </>
  ),
  'Material Editor': (
    <>
      <path d="M2 22V3h8q20 3 24 19z" fill="#f0812a" />
      <P d="M2 22L12 3M2 22L24 7M2 22l30-9" c="#eef1f2" w={1.5} />
      <path d="M2 22h32v12H2z" fill={NAVY} />
      <circle cx="8" cy="28" r="1.5" fill="#fff" />
    </>
  ),
  'Video Textures': (
    <>
      <circle cx="18" cy="18" r="17" fill={NAVY} />
      <path d="M10 4h5v6h-5zM21 4h5v6h-5zM4 11h6v6H4zM15 10h6v7h-6zM26 11h6v6h-6zM10 17h5v7h-5zM21 17h5v7h-5zM4 24h6v5H4zM15 24h6v6h-6zM26 24h6v5h-6zM10 30h5v3h-5zM21 30h5v3h-5zM15 1h6v3h-6zM1 17h3v7H1zM32 17h3v7h-3z" fill="#f3f5f6" />
    </>
  ),
  'Upload Management': (
    <>
      <path d="M8 28a8 8 0 0 1-1-14 11 11 0 0 1 21-3 8.5 8.5 0 0 1 1 17z" fill={NAVY} />
      <P d="M18 15l7 8h-4v9h-6v-9h-4z" f="#ee6a25" c="#fff" w={1.4} />
    </>
  ),
  'General Settings': (
    <>
      <circle cx="13" cy="14" r="7" fill="none" stroke={NAVY} strokeWidth="5" />
      <circle cx="13" cy="14" r="11" fill="none" stroke={NAVY} strokeWidth="3" strokeDasharray="4.32 4.32" />
      <circle cx="30" cy="26" r="4.5" fill="none" stroke="#ee6a25" strokeWidth="3.5" />
      <circle cx="30" cy="26" r="7" fill="none" stroke="#ee6a25" strokeWidth="2.5" strokeDasharray="2.75 2.75" />
    </>
  ),
  Feedback: (
    <>
      <path d="M0 6h36v25H0z" fill={NAVY} />
      <P d="M1 7l17 15L35 7M1 30l12-12M35 30L23 18" c="#fff" w={1.6} />
    </>
  ),
  'About Enscape': (
    <>
      <circle cx="18" cy="18" r="16" fill={NAVY} />
      <path d="M16 15h4v11h-4zM16 9h4v4h-4z" fill="#fff" />
    </>
  ),
  Account: (
    <>
      <circle cx="18" cy="10" r="7.5" fill={NAVY} />
      <path d="M4 33V26q0-7 7-7h14q7 0 7 7v7z" fill={NAVY} />
    </>
  ),

  // Bezier curves
  'Classic Bezier': (
    <>
      <P d="M11 23q7-12 14 0" c="#333f8f" w={1.8} />
      <P d="M12 12h12M11 23l3-10M25 23l-3-10" c="#b56" w={0.7} />
    </>
  ),
  Polyline: <P d="M11 20l4-3 3 6 6-11-1 12" c="#4a5a9c" w={1.4} />,
  'Polyline Divider': (
    <>
      <path d="M11 12h9l3 6-8 6z" fill="#bbb" />
      <P d="M12 23l4-9 4 9 4-9 1 9" c="#a0522d" w={1.5} />
    </>
  ),
  'Cubic Bezier': <P d="M11 23q3-16 6-8t5 5l3-8" c="#5b3f96" w={1.8} />,
  'Catmull Spline': <P d="M12 24h5q2-4 2-8t5-4" c="#48508f" w={1.6} />,
  'Arc Green': (
    <>
      <P d="M12 24q0-5 2-8" c="#a33" w={1.4} />
      <P d="M13 17q3-5 12-5" c="#3f8f46" w={1.8} />
    </>
  ),
  'Rounded Square': <rect x="12" y="12" width="12" height="12" rx="3" fill="none" stroke="#7a5ba0" strokeWidth="1.5" />,
  Spiral: <P d="M18 18q3-2 3 1t-5 3-3-7 8-3 4 9-8 4-6-7 4-8" c="#3a4399" w={1.3} />,
  'Arc Blue': <P d="M12 24q-1-12 13-12" c="#3a4399" w={1.7} />,
  'Poly Olive': <P d="M11 21l5-4 2 6 6-11-1 12" c="#6f7a2c" w={1.6} />,
  'S Curve': <P d="M12 12h6q5 2 4 5t3 6" c="#44519c" w={1.5} />,
  'N Curve': <P d="M12 23q0-10 6-10t4 4l4 1" c="#6a5a9c" w={1.4} />,
  'Arc Red': <P d="M12 24q-1-12 13-12" c="#c02a44" w={1.8} />,
  'Poly Grey': <P d="M11 22l4-5 4 6 5-11-1 10" c="#77806a" w={1.6} />,
  'Dotted Circle': <circle cx="18" cy="18" r="6.5" fill="none" stroke="#6f8f8a" strokeWidth="1.8" strokeDasharray="3 1.5" />,
  Wrench: (
    <>
      <path d="M12 24l8-7" stroke="#2f7d25" strokeWidth="4" strokeLinecap="round" />
      <path d="M18 13l6-3-2 4 2 1 3-2-2 6-5 1z" fill="#2f7d25" />
    </>
  ),
  Oval: (
    <>
      <P d="M13 19q3-8 10-7 4 6-2 11" c="#3a4ca8" w={1.5} />
      <P d="M13 19q-2 6 4 5l4-1" c="#d13c52" w={1.5} />
    </>
  ),
  'Pie Arc': (
    <>
      <P d="M12 17q4-5 11-5v11" c="#3a4ca8" w={1.4} />
      <P d="M12 17l11 7" c="#d13c52" w={1.5} />
    </>
  ),
};

/* ---------- toolbars, "|" is a separator ---------- */

interface ToolbarProps {
  tools: string[];
  active?: string[];
  className?: string;
  children?: React.ReactNode;
}

const mask = (count: number): string[] => Array.from({ length: count }, () => 'hidden');

const cameraBar = ['Orbit', 'Pan', 'Zoom', 'Zoom Window', 'Zoom Extents', 'Previous', 'Position Camera', 'Look Around', 'Walk'];
const sandboxBar = ['Contours', 'Scratch', '|', 'Smoove', 'Stamp', 'Drape', 'Add Detail', 'Flip Edge'];
const subdBar = [
  'Subdivide', '|', 'Increase Subdivision', 'Decrease Subdivision', '|', 'Crease', 'SubD Push Pull', '|',
  'SubD Preview', '|', 'Loop Select', '|', 'SubD Help'
];
const constructionBar = ['Tape Measure', 'Dimension', 'Protractor', 'Text', 'Axes', '3D Text'];
const advancedCameraBar = [
  'Create Camera', 'Look Through Camera', 'Lock Camera', 'Camera Lines', 'Frustum Lines', 'Frustum Volume', 'Clear Aspect Ratio'
];
const solarBar = ['Solar North', 'Solar Preview', 'Solar Day', 'Solar Hour', '|', 'Select Point', 'Stretch Point'];
const editBar = ['Move', 'Push Pull', 'Rotate', 'Follow Me', 'Scale', 'Offset'];
const viewsBar = ['Iso', 'Top', 'Front', 'Right', 'Back', 'Left'];
const sectionBar = ['Section Plane', 'Display Section Planes', 'Display Section Cuts', 'Display Section Fill'];
const stylesBar = ['X-Ray', 'Back Edges', '|', 'Wireframe', 'Hidden Line', 'Shaded', 'Shaded With Textures', 'Monochrome'];
const solidBar = ['Outer Shell', '|', 'Intersect', 'Union', 'Subtract', 'Trim', 'Split'];
const bitBar = [
  ...mask(7), 'Stair Split', 'Revolve', 'Face Center', 'Fillet', 'Chamfer', 'Extend Edge', 'Offset Edges', 'Horizontal Plane',
  'Best Fit', 'Linear Array', 'Rectangular Array', 'Polar Array', 'Vertical Wall', 'Wall Opening', 'Horizontal Groove',
  'Ramp', 'Stair Up', 'Stair Down', 'Stair Split', 'Spiral Stair', 'Escalator', 'Window Frame', 'Door Frame',
  'Divide Face', 'Louvers', 'Louver Stack', 'Fins', 'Grid Dense', 'Grid Frame', 'Purlins', 'Rafters', 'Hip Roof'
];
const powerBar = [
  ...mask(7), 'Axis Array', 'Ring', 'Corner Cut', 'Lines', 'Flag', 'Wood Profile', 'Pipe', 'Elbow', 'Red Dots', 'Blue Dots',
  'Cross Red', 'Cross Green', 'Cross Blue', 'Axis Array', 'Drop', 'Drop Grid', 'Mirror', 'Loop', 'Loop Remove',
  'Loop Divide', 'Drop Move', 'Crate', 'Bend Arrow', 'Green Blocks', ...mask(6), 'Box Points', 'Box Red Top',
  'Box Green Top', 'Grid Diagonal', 'Grid Quarter', 'Grid Ninth', 'Points', 'Arc Points', 'Frames'
];
const jointBar = [
  'Joint Options', '|', 'Joint Redo', 'Joint Push Pull', 'Round Push Pull', 'Vector Push Pull', 'Normal Push Pull',
  'Extrude Push Pull', 'Follow Push Pull'
];
const layerBar = ['Layer S', 'Layer Blue', 'Layer Query', 'Layer Arrow'];
const loftBar = ['Skinning', 'Loft', 'Path Loft'];
const flowBar = ['Flowify', 'Play', 'Stop', 'Rewind', '|', 'Curved Grid', 'Pin'];
const soapBar = ['Skin', 'X/Y', 'Bub', 'Run Soap', 'Stop Soap', 'Soap Help'];
const textureBar = [
  'Texture Menu', '|', 'Texture Quad', '|', 'Texture Fan', '|', 'Swap Blue', 'Swap Red', '|', 'Scale Diagonal', '|',
  'Twist Quad', '|', 'Turn Blue', 'Turn Red', '|', 'Bend Pink', '|'
];
const locationBar = ['Terrain', 'Grey Wedge'];
const enscapeBar = [
  'Start Enscape', 'Live Updates', 'Synchronize Views', '|', 'Add View', 'Asset Library', 'Material Editor',
  'Video Textures', 'Upload Management', '|', 'General Settings', '|', 'Feedback', 'About Enscape', '|', 'Account'
];
const bezierBar = [
  'Classic Bezier', 'Polyline', 'Polyline Divider', 'Cubic Bezier', 'Catmull Spline', 'Arc Green', 'Rounded Square',
  'Spiral', 'Arc Blue', 'Poly Olive', 'S Curve', 'N Curve', 'Arc Red', '|', 'Poly Grey', 'Dotted Circle', 'Wrench',
  'Oval', 'Pie Arc'
];

function ToolIcon({ name, className = 'size-9' }: { name: string; className?: string }) {
  return (
    <svg viewBox="0 0 36 36" className={clsx('shrink-0 overflow-visible', className)} aria-hidden="true">
      {icons[name]}
    </svg>
  );
}

function Toolbar({ tools, active = [], className, children }: ToolbarProps) {
  return (
    <div
      role="toolbar"
      className={clsx('flex h-[46px] shrink-0 border-b border-[#b4b7b9] bg-[#eef1f2]', className)}
    >
      <div className="my-1 mr-1 ml-1 w-[2px] border-l-2 border-dotted border-[#b0b3b5]" />
      {tools.map((tool, i) =>
        tool === '|' ? (
          <div key={i} className="mx-[3px] my-1 w-[2px] border-r border-[#8c8f91]" />
        ) : (
          <button
            key={i}
            type="button"
            aria-label={tool}
            className={clsx(
              'my-0.5 flex w-[42px] items-center justify-center rounded-sm border',
              active.includes(tool) && tool !== 'Divide Face' && 'border-[#a3cfee] bg-[#cce5f7]',
              active.includes(tool) && tool === 'Divide Face' && 'border-[#cfe3f2] bg-[#e3eef7]',
              !active.includes(tool) && 'border-transparent'
            )}
          >
            <ToolIcon name={tool} />
          </button>
        )
      )}
      {children}
      <div className="w-[2px] border-r border-[#b4b7b9]" />
    </div>
  );
}

function ToolbarRow({ className, children }: { className?: string; children: React.ReactNode }) {
  return <div className={clsx('flex overflow-hidden', className)}>{children}</div>;
}

const thumb =
  '[&::-webkit-slider-thumb]:h-[14px] [&::-webkit-slider-thumb]:w-[5px] [&::-webkit-slider-thumb]:appearance-none [&::-webkit-slider-thumb]:border [&::-webkit-slider-thumb]:border-[#8a8c8e] [&::-webkit-slider-thumb]:bg-[#f4f4f4]';

function ShadowSliders() {
  return (
    <>
      <div className="ml-[11px] flex w-[228px] flex-col pt-[10px]">
        <input
          type="range"
          aria-label="Date"
          min={0}
          max={1000}
          defaultValue={863}
          className={clsx(
            'h-2 w-full appearance-none border-t-2 border-l-2 border-[#8a8c8e] bg-[linear-gradient(90deg,#fdf6d8,#f3b81f_30%,#e8321f_55%,#ee3a38_75%,#fbd5d5_90%,#fff)]',
            thumb
          )}
        />
        <div className="mt-[2px] flex justify-between pr-1 pl-[7px] text-[12px] leading-4">
          {'JFMAMJJASOND'.split('').map((m, i) => (
            <span key={i}>{m}</span>
          ))}
        </div>
      </div>
      <div className="mr-[13px] ml-[24px] flex w-[228px] flex-col pt-[10px]">
        <input
          type="range"
          aria-label="Time"
          min={0}
          max={1000}
          defaultValue={617}
          className={clsx(
            'h-2 w-full appearance-none border-t-2 border-l-2 border-[#8a8c8e] bg-[linear-gradient(90deg,#fff,#8cc7ec_30%,#5a7fd0_60%,#2a4ba0_75%,#000c33_92%,#000)]',
            thumb
          )}
        />
        <div className="mt-[2px] flex justify-between text-[12px] leading-4">
          <span>06:42 AM</span>
          <span>Noon</span>
          <span>04:46 PM</span>
        </div>
      </div>
    </>
  );
}

function SketchUpMark({ className }: { className?: string }) {
  return (
    <svg viewBox="0 0 30 30" className={className} aria-hidden="true">
      <path d="M0 0h30v30H0z" fill="#e9f1f7" />
      <path d="M8 9l8-4 9 5v10l-9 5v-4l5-3v-6l-5-3-4 2 7 4v5l-3 2v-5L8 12z" fill="#1271b5" />
      <path d="M5 13l8 4v3l-8-4zM5 18l8 4v4l-8-5z" fill="#1271b5" />
      <path d="M9 10l7-3 7 4v8l-5 3M12 12l7 4v6" stroke="#e9f1f7" strokeWidth=".8" fill="none" />
    </svg>
  );
}

function TitleBar() {
  return (
    <header className="flex h-[29px] shrink-0 items-center bg-[#ebf0f4] pr-1 pl-[2px]">
      <SketchUpMark className="mr-[6px] size-[19px] border border-[#a9c8df]" />
      <h1 className="text-[14px]">progres seni - SketchUp Pro 2021</h1>
      <div className="ml-auto flex">
        {['M2 7h12', 'M3 5h8v9H3zM6 5V2h8v9h-3', 'M2 2l12 12M14 2L2 14'].map((d, i) => (
          <button key={d} type="button" aria-label={['Minimize', 'Restore', 'Close'][i]} className="flex w-[58px] justify-center">
            <svg viewBox="0 0 16 16" className="size-4">
              <path d={d} stroke="#111" strokeWidth="1.3" fill="none" />
            </svg>
          </button>
        ))}
      </div>
    </header>
  );
}

const menus = ['File', 'Edit', 'View', 'Camera', 'Draw', 'Tools', 'Window', 'Extensions', 'Help'];

function MenuBar() {
  return (
    <nav className="flex h-[25px] shrink-0 items-center gap-[19px] bg-white pl-2 text-[14px]">
      {menus.map((m) => (
        <button key={m} type="button">
          {m}
        </button>
      ))}
    </nav>
  );
}

function ThudioPanel() {
  const items = [
    { label: 'Tools', Icon: MdOutlineBuild },
    { label: 'Furniture', Icon: MdOutlineWeekend },
    { label: 'Account', Icon: MdOutlineAccountCircle },
    { label: 'Help', Icon: MdHelpOutline }
  ];
  return (
    <section className="absolute top-[146px] left-[9px] w-[326px] overflow-hidden rounded-lg border border-[#c9cbcc] bg-[#fdfdfd] shadow-lg">
      <div className="flex h-9 items-center bg-[#eff1f1] pl-[9px] text-[14px] text-[#8d9091]">
        Thudio v1.4.4
        <button type="button" aria-label="Close" className="ml-auto flex h-[25px] w-[25px] items-center justify-center bg-[#d6d8da] text-[11px] text-[#eceeef]">
          ×
        </button>
      </div>
      <div className="flex h-12 items-center justify-center pr-[10px] pl-[9px]">
        {items.map(({ label, Icon }) => (
          <button
            key={label}
            type="button"
            aria-label={label}
            className="flex h-9 w-[65px] items-center justify-center border-l border-[#d9dcdd] text-[#5d7377] first:border-l-0"
          >
            <Icon className="size-[34px]" />
          </button>
        ))}
      </div>
    </section>
  );
}

function Tooltip() {
  return (
    <div
      role="tooltip"
      className="absolute top-[191px] left-[1291px] flex border border-[#6f7172] bg-[#f8faf9] px-[5px] pt-[2px] pb-1 text-[#4c4e50] shadow-[3px_3px_3px_#0006]"
    >
      <ToolIcon name="Divide Face" className="mt-[4px] mr-[8px] ml-1 size-6" />
      <div>
        <p className="border-b border-[#6f7172] pr-[6px] text-[13px] leading-[24px] font-bold">Divide selected face into panels.</p>
        <p className="text-[13px] leading-[22px]">Divide selected face into panels.</p>
      </div>
    </div>
  );
}

const scenes = ['KONSEP FASAD', 'TAMPAK ATAS', 'PIRAMID ATAS'];

function Viewport() {
  return (
    <div className="flex min-w-0 flex-1 flex-col">
      <div role="tablist" className="flex h-7 shrink-0 items-start border-b border-[#fafafa] pl-[2px] font-['Liberation_Sans',sans-serif] text-[14px]">
        {scenes.map((s, i) => (
          <button
            key={s}
            type="button"
            role="tab"
            aria-selected={i === 2}
            className={clsx('h-6 border-l border-[#dfe1e2] px-[5px]', i === 2 ? 'bg-[#f7f8f9]' : 'pt-[3px]')}
          >
            {s}
          </button>
        ))}
      </div>
      <main className="min-h-0 flex-1 border-t-2 border-l-2 border-[#6b6d6e] bg-white">
        <svg viewBox="0 0 1616 580" className="h-full w-full" stroke="#0a0a0a" strokeWidth="2" strokeLinejoin="round">
          <path d="M855 147L1010 146L929 192Z" fill="#c1c3c4" />
          <path d="M802 197L869 250L797 353Z" fill="#d9dadb" />
          <path d="M1063 197L989 250L1067 351Z" fill="#d9dadb" />
          <path d="M929 309L1013 406L850 407Z" fill="#fbfcfc" />
        </svg>
      </main>
      <div className="mt-[2px] mb-[2px] flex h-[46px] w-[368px] shrink-0 items-center border-r border-b border-[#b4b7b9] bg-[#eef1f2] text-[13px]">
        <div className="mr-[9px] ml-1 h-10 border-l-2 border-dotted border-[#b0b3b5]" />
        <label htmlFor="measurements">Measurements</label>
        <input id="measurements" className="ml-16 h-6 w-[190px] bg-[#eff2f3]" />
      </div>
    </div>
  );
}

const trayRows = ['Materials', 'Components', 'Styles', 'Tags', 'Shadows', 'Scenes', 'Instructor'];

function TrayHeader({ title, open }: { title: string; open?: boolean }) {
  return (
    <button
      type="button"
      aria-expanded={!!open}
      className="flex h-6 w-full shrink-0 items-center border-t border-[#a5a8aa] bg-linear-to-b from-[#e6e7e8] to-[#b9bbbc] pl-[10px] text-[14px] text-[#1b1b1b] shadow-[inset_0_1px_0_#f6f7f8]"
    >
      <svg viewBox="0 0 10 10" className="mr-[7px] size-[10px]">
        <path d={open ? 'M0 1h10L5 9z' : 'M1 0v10l8-5z'} fill="#000" />
      </svg>
      {title}
    </button>
  );
}

function Field({ label, id, children }: { label: string; id: string; children: React.ReactNode }) {
  return (
    <div className="flex h-7 items-center">
      <label htmlFor={id} className="mr-1 w-[67px] shrink-0 text-right">
        {label}
      </label>
      {children}
    </div>
  );
}

function Chevron() {
  return (
    <svg viewBox="0 0 10 10" className="size-[10px]">
      <path d="M1 3l4 4 4-4" stroke="#555" fill="none" />
    </svg>
  );
}

const toggles = [
  { label: 'Hide', on: true, d: 'M1 12q11-13 22 0-11 10-22 0z', dot: true },
  { label: 'Lock', on: false, d: 'M2 11h12v10H2zM14 11V7q0-4 4-4t4 4v7' },
  { label: 'Cast shadows', on: true, d: 'M4 8l9-5 9 11v4l-11 4-4-6z', solid: 'M4 8l9-5 5 6-11 5z' },
  { label: 'Receive shadows', on: true, d: 'M3 6l9-4 10 12-10 5z', solid: 'M11 18l10-5 2 4-9 6z' }
];

function DefaultTray() {
  return (
    <aside className="mt-[5px] ml-[2px] flex w-[301px] shrink-0 flex-col overflow-hidden border-b-2 border-l-2 border-b-[#66778a] border-l-[#a9c0da] bg-[#f4f6f7]">
      <div className="flex h-8 shrink-0 items-center bg-[#95b4d4] pt-px pl-[2px]">
        <h2 className="font-['DejaVu_Sans_Condensed','DejaVu_Sans',sans-serif] text-[13px] font-bold">Default Tray</h2>
        <button type="button" aria-label="Close tray" className="ml-auto h-[13px] w-[3px] bg-[#c75050]" />
      </div>
      <TrayHeader title="Entity Info" open />
      <div className="h-[221px] shrink-0 bg-[#ebeded] pl-1 font-['DejaVu_Sans_Condensed','DejaVu_Sans',sans-serif] text-[12px]">
        <p className="h-[33px] border-b border-[#9b9d9f] pl-[6px] text-[12px] leading-[32px] font-bold">Solid Group (1 in model)</p>
        <div className="flex pt-[7px]">
          <svg viewBox="0 0 53 60" className="mt-px ml-[10px] h-[60px] w-[53px] shrink-0">
            <path d="M.5.5h52v59H.5z" fill="#fff" stroke="#8d979d" />
            <path d="M1 4l51 50H1z" fill="#a1b2bc" />
            <path d="M1 55h51v4H1z" fill="#edf2f5" />
          </svg>
          <div className="-mr-2 ml-[9px] flex-1">
            <Field label="Tag:" id="tag">
              <div className="flex h-6 flex-1 items-center border border-[#cfd1d3] bg-white pr-[2px] pl-1">
                <select id="tag" className="flex-1 appearance-none outline-none">
                  <option>Untagged</option>
                </select>
                <Chevron />
              </div>
            </Field>
            <Field label="Instance:" id="instance">
              <input id="instance" className="h-6 min-w-0 flex-1 border-b border-[#808284] bg-white" />
            </Field>
            <Field label="Type:" id="type">
              <div className="flex h-[22px] flex-1 items-center rounded-sm border border-[#c3c5c7] bg-white pl-1">
                <input id="type" defaultValue="Type: <undefined>" className="w-0 flex-1 outline-none" />
                <div className="flex h-full w-[18px] items-center justify-center border-l border-[#c3c5c7]">
                  <Chevron />
                </div>
              </div>
            </Field>
            <Field label="Volume:" id="volume">
              <input id="volume" defaultValue="5120000 m³" className="h-6 min-w-0 flex-1 border-b border-[#808284] bg-[#eceeef] pl-[5px]" />
            </Field>
            <Field label="Toggles:" id="toggle-0">
              <div className="flex gap-1">
                {toggles.map((t, i) => (
                  <button
                    key={t.label}
                    id={`toggle-${i}`}
                    type="button"
                    aria-label={t.label}
                    aria-pressed={t.on}
                    className={clsx(
                      'flex h-[26px] w-6 items-center justify-center border-t border-l',
                      t.on ? 'border-[#a9abad] bg-[#f3f4f5]' : 'border-transparent'
                    )}
                  >
                    <svg viewBox="0 0 24 24" className="size-[18px]">
                      <path d={t.d} stroke="#000" strokeWidth={t.solid ? 1.4 : 2.2} fill="none" />
                      {t.dot && <circle cx="12" cy="11" r="5" />}
                      {t.solid && <path d={t.solid} />}
                    </svg>
                  </button>
                ))}
              </div>
            </Field>
          </div>
        </div>
      </div>
      {trayRows.map((title) => (
        <TrayHeader key={title} title={title} />
      ))}
    </aside>
  );
}

function StatusBar() {
  return (
    <footer className="flex h-[29px] shrink-0 items-center bg-[#edeeef] pb-[2px] pl-[7px] text-[15px]">
      <svg viewBox="0 0 18 18" className="size-[18px]">
        <circle cx="9" cy="9" r="8" fill="none" stroke="#9c9ea0" strokeWidth="1.3" />
        <path d="M9 4a3 3 0 0 1 3 3q0 2-3 7-3-5-3-7a3 3 0 0 1 3-3z" fill="#8d8f91" />
      </svg>
      <svg viewBox="0 0 18 18" className="ml-4 size-[18px]">
        <circle cx="9" cy="9" r="8" fill="none" stroke="#000" strokeWidth="1.6" />
        <circle cx="9" cy="4.5" r="1.5" />
        <path d="M7 7h4v4h-1v4H8v-4H7z" />
      </svg>
      <div className="mr-[10px] ml-3 h-[14px] border-l border-[#77797b]" />
      Divide selected face into panels.
    </footer>
  );
}

/* ---------- taskbar ---------- */

function ChromeMark() {
  return (
    <>
      <circle cx="15" cy="15" r="15" fill="#fbc116" />
      <path d="M2 7.5A15 15 0 0 1 28 7.5H15a7.5 7.5 0 0 0-6.5 11z" fill="#e33b2e" />
      <path d="M2 7.5l6.5 11.2A7.5 7.5 0 0 0 18 22l-5 8A15 15 0 0 1 2 7.5z" fill="#259b48" />
      <circle cx="15" cy="15" r="7" fill="#fff" />
      <circle cx="15" cy="15" r="5.5" fill="#3f78e0" />
    </>
  );
}

interface TaskApp {
  name: string;
  running?: boolean;
  current?: boolean;
  art: React.ReactNode;
}

const apps: TaskApp[] = [
  {
    name: 'Task View',
    art: (
      <>
        <path d="M0 10h22v19H0z" fill="#6c6d70" />
        <path d="M8 1h22v20H8z" fill="#eceef2" />
        <path d="M8 10h14v11H8z" fill="#a9abb0" />
      </>
    )
  },
  {
    name: 'Chat',
    art: (
      <>
        <path d="M15 1a14 14 0 1 1-5 27l-9 1 2-8A14 14 0 0 1 15 1z" fill="#6264b5" />
        <path d="M8 10h10q1 0 1 1v9q0 1-1 1H8q-1 0-1-1v-9q0-1 1-1zM20 13l4-3v11l-4-3z" fill="#fff" />
      </>
    )
  },
  { name: 'Chrome', art: <ChromeMark /> },
  {
    name: 'WhatsApp',
    running: true,
    art: (
      <>
        <path d="M0 30l2-8A14.5 14.5 0 1 1 8 28z" fill="#fff" />
        <path d="M3 27l1-6A12 12 0 1 1 9 26z" fill="#35c15a" />
        <path d="M10 9q2-2 3 1l1 2-2 2q2 4 5 5l2-2 4 2q0 4-4 4Q10 22 9 12z" fill="#fff" />
      </>
    )
  },
  {
    name: 'Edge',
    art: (
      <>
        <circle cx="15" cy="15" r="15" fill="#1b6fc0" />
        <path d="M0 14A15 15 0 0 1 30 13q0 7-8 7-5 0-4-3 2-7-6-7Q3 9 0 14z" fill="#47c7a0" />
        <path d="M0 14Q3 4 15 4q7 1 8 6-6-5-13-2T0 14z" fill="#36a9dd" />
        <path d="M12 16q-2 10 8 13-9 2-14-5-3-7 6-8z" fill="#125290" />
        <circle cx="8" cy="22" r="7.5" fill="#fff" />
        <circle cx="8" cy="19" r="2.5" fill="#888" />
        <path d="M4 23h8v3H4z" fill="#888" />
      </>
    )
  },
  {
    name: 'File Explorer',
    running: true,
    art: (
      <>
        <path d="M0 4q0-2 2-2h8l3 4h-13z" fill="#e0992e" />
        <path d="M0 8l11-1 3-2h14q2 0 2 2v20q0 2-2 2H2q-2 0-2-2z" fill="#fccf53" />
        <path d="M5 29v-5q0-3 3-3h14q3 0 3 3v5z" fill="#2678c6" />
        <path d="M10 25h10" stroke="#1b4f8f" strokeWidth="1.5" />
      </>
    )
  },
  {
    name: 'Spark',
    art: (
      <>
        <path d="M0 0h30v30H0z" fill="#000" />
        <path d="M15 0v30M0 15h30M4 4l22 22M26 4L4 26" stroke="#f4f4ee" strokeWidth="1.8" />
        <circle cx="15" cy="15" r="4.5" fill="#fff" />
      </>
    )
  },
  {
    name: 'Chrome Profile',
    running: true,
    art: (
      <>
        <ChromeMark />
        <circle cx="26" cy="4" r="10" fill="#4a4540" />
        <path d="M20-2q5-5 9-1l-2 14q-4 3-6 1z" fill="#8a8178" />
        <path d="M24-3h5l2 9-5 4z" fill="#221f1c" />
      </>
    )
  },
  {
    name: 'AutoCAD',
    running: true,
    art: (
      <>
        <path d="M0 0h30v30H0z" fill="#f6ebe8" />
        <path d="M5 25L12 3h7l6 22h-5l-1-6h-8l-2 6zM12 15h6l-2-8z" fill="#b7242b" />
      </>
    )
  },
  {
    name: 'Sticky Notes',
    running: true,
    art: (
      <>
        <path d="M2 4q0-2 2-2h22q2 0 2 2v22q0 2-2 2H4q-2 0-2-2z" fill="#fbdc2b" />
        <path d="M15 28V15h13v11q0 2-2 2z" fill="#f3a623" />
        <path d="M15 28V15h13z" fill="#444446" />
      </>
    )
  },
  {
    name: 'SketchUp',
    running: true,
    current: true,
    art: (
      <>
        <path d="M0 0h30v30H0z" fill="#f1f5f8" />
        <path d="M7 8l8-4 9 5v11l-8 5M5 13l9 5v7M5 18l6 4M11 10l8 5v8M7 8l4 2M12 7l8 4" stroke="#1c6fac" strokeWidth="2" fill="none" />
      </>
    )
  }
];

function Taskbar() {
  return (
    <footer className="grid h-[60px] shrink-0 grid-cols-[1fr_auto_1fr] items-center bg-[linear-gradient(90deg,#12252f_17%,#001e48_20%,#001b4b_50%,#031f45_70%,#12252f_80%)] text-[14px] text-white">
      <button type="button" className="flex items-center pl-[25px] text-left">
        <svg viewBox="0 0 30 30" className="mr-[9px] size-[30px]">
          <circle cx="15" cy="15" r="13" fill="#f28c28" />
          <path d="M3 11a4 4 0 0 1 0-7 5 5 0 0 1 9-1 4 4 0 0 1 3 8zM15 26a3 3 0 0 1 0-6 5 5 0 0 1 9-2 4 4 0 0 1 5 8z" fill="#b9d2f0" />
        </svg>
        <span className="leading-5">
          27°C
          <br />
          <span className="text-[#bcc4c9]">Sebagian cerah</span>
        </span>
      </button>

      <div className="flex h-full items-center">
        <button type="button" aria-label="Start" className="mr-[5px] flex w-[54px] justify-center">
          <svg viewBox="0 0 30 30" className="size-[30px]">
            <path d="M0 1h14v14H0z" fill="#8fdcf6" />
            <path d="M15 1h15v14H15z" fill="#5fcbf8" />
            <path d="M0 16h14v14H0z" fill="#5fc6f5" />
            <path d="M15 16h15v14H15z" fill="#57aee8" />
          </svg>
        </button>
        <label className="mr-[3px] flex h-10 w-[274px] items-center rounded-full border border-[#46597a] bg-[#283c60] pr-[2px] pl-[14px]">
          <svg viewBox="0 0 20 20" className="mr-[11px] size-5">
            <circle cx="8" cy="8" r="7" stroke="#dfe4ec" strokeWidth="2" fill="#3b4d70" />
            <path d="M13 13l6 6" stroke="#dfe4ec" strokeWidth="2.4" />
          </svg>
          <input aria-label="Search" placeholder="Search" className="w-0 flex-1 text-[16px] outline-none placeholder:text-[#d5dae3]" />
          <svg viewBox="0 0 64 28" className="h-7 w-16">
            <path d="M8 4q12-5 30-2 14 2 25 4 2 14-5 20-28 2-46 0Q2 25 0 19q4-12 8-15z" fill="#8ea637" />
            <path d="M0 19Q4 5 14 4l14 8-8 14h-8Q2 25 0 19z" fill="#b0982f" />
            <path d="M8 6l9-4 7 2 6-3 8 2 10 2-8 6-12 1z" fill="#b9bfd0" />
            <path d="M24 4l6-3 6 3-6 2z" fill="#fff" />
            <path d="M42 15l20-9 1 5q-8 1-21 4z" fill="#e8e6d8" />
            <path d="M12 16l6-5 3 4-5 3 4 4-8-2z" fill="#fff" />
            <path d="M40 24q8-8 22-9l-4 11H42z" fill="#6f9a2a" />
            <path d="M25 11l11-1-4 7 4 3-4 7h-6q4-5 0-8 2-4-1-8z" fill="#25a7e8" />
          </svg>
        </label>
        {apps.map((app) => (
          <button key={app.name} type="button" aria-label={app.name} className="relative flex h-full w-[55px] items-center justify-center">
            <span className={clsx('flex h-[50px] w-[50px] items-center justify-center rounded-md', app.current && 'bg-[#1b2f55]')}>
              <svg viewBox="0 0 30 30" className="size-[30px] overflow-visible">
                {app.art}
              </svg>
            </span>
            {app.name === 'WhatsApp' && (
              <span className="absolute top-[9px] right-[5px] flex h-5 w-[23px] items-center justify-center rounded-full bg-[#5bb8ec] text-[12px] text-[#0b1b2b]">
                12
              </span>
            )}
            {app.running && (
              <span
                className={clsx(
                  'absolute bottom-[6px] h-1 rounded-full',
                  app.current ? 'w-5 bg-[#5fc3ea]' : 'w-2 bg-[#8f9cb8]'
                )}
              />
            )}
          </button>
        ))}
      </div>

      <div className="flex items-center justify-end pr-[25px]">
        <svg viewBox="0 0 16 10" className="mr-[22px] h-[10px] w-4" fill="none" stroke="#fff" strokeWidth="2">
          <path d="M2 9l6-6 6 6" />
        </svg>
        <svg viewBox="0 0 22 22" className="mr-[18px] size-[22px]" fill="none" stroke="#dfe6ea" strokeWidth="1.5">
          <path d="M2 9A9 9 0 0 1 19 6M20 1v6h-6M3 21v-6h6M3 15q3 5 8 5" />
          <circle cx="16" cy="16" r="5.5" fill="#f7941d" stroke="none" />
        </svg>
        <svg viewBox="0 0 20 18" className="mr-[10px] h-[18px] w-5" fill="none" stroke="#fff" strokeWidth="1.6">
          <path d="M1 7q9-9 18 0M4 10q6-6 12 0M7 13q3-3 6 0" />
          <circle cx="10" cy="15" r="1.5" fill="#fff" stroke="none" />
        </svg>
        <svg viewBox="0 0 20 18" className="mr-[10px] h-[18px] w-5" fill="none" stroke="#fff" strokeWidth="1.4">
          <path d="M1 7h3l5-5v14l-5-5H1zM11 6q2 3 0 6M14 4q4 5 0 10M16 1q6 8 0 16" />
        </svg>
        <svg viewBox="0 0 20 18" className="mr-[24px] h-[18px] w-5" fill="none" stroke="#fff" strokeWidth="1.4">
          <path d="M6 4h10q2 0 2 2v8q0 2-2 2H3q-2 0-2-2v-3" />
          <path d="M7 6h9v8H4v-3zM19 8v5M3 1v5h3L2 11" fill="#fff" />
        </svg>
        <div className="text-right leading-5">
          08:02
          <br />
          18/10/2023
        </div>
        <span className="ml-[9px] flex size-5 items-center justify-center rounded-full bg-[#5bb8ec] text-[12px] text-[#0b1b2b]">4</span>
      </div>
    </footer>
  );
}

export default function App() {
  return (
    <div className="relative flex h-screen flex-col overflow-hidden bg-[#ebedee] font-['Noto_Sans','Open_Sans',sans-serif] text-[#111]">
      <TitleBar />
      <MenuBar />

      <div className="shrink-0 font-['Liberation_Sans',sans-serif]">
        <ToolbarRow>
          <Toolbar tools={cameraBar} />
          <Toolbar tools={['Show Shadows']}>
            <ShadowSliders />
          </Toolbar>
          <Toolbar tools={sandboxBar} className="ml-[6px]" />
          <Toolbar tools={subdBar} active={['SubD Preview']} />
          <Toolbar tools={constructionBar} />
        </ToolbarRow>
        <ToolbarRow>
          <Toolbar tools={advancedCameraBar} />
          <Toolbar tools={solarBar} />
          <Toolbar tools={editBar} />
          <Toolbar tools={viewsBar} />
          <Toolbar tools={sectionBar} active={['Display Section Planes', 'Display Section Cuts', 'Display Section Fill']} />
          <Toolbar tools={stylesBar} active={['Shaded With Textures']} />
          <Toolbar tools={solidBar} />
        </ToolbarRow>
        <ToolbarRow>
          <Toolbar tools={bitBar} active={['Divide Face']} />
        </ToolbarRow>
        <ToolbarRow>
          <Toolbar tools={powerBar} />
        </ToolbarRow>
        <ToolbarRow className="pl-[118px]">
          <Toolbar tools={jointBar} />
          <Toolbar tools={layerBar} />
          <Toolbar tools={loftBar} />
          <Toolbar tools={flowBar} />
          <Toolbar tools={soapBar} />
          <Toolbar tools={textureBar} />
          <Toolbar tools={locationBar} />
        </ToolbarRow>
        <ToolbarRow className="pl-[596px]">
          <Toolbar tools={enscapeBar} />
          <Toolbar tools={bezierBar} />
        </ToolbarRow>
      </div>

      <div className="flex min-h-0 flex-1">
        <Viewport />
        <DefaultTray />
      </div>
      <StatusBar />
      <Taskbar />

      <ThudioPanel />
      <Tooltip />
    </div>
  );
}
